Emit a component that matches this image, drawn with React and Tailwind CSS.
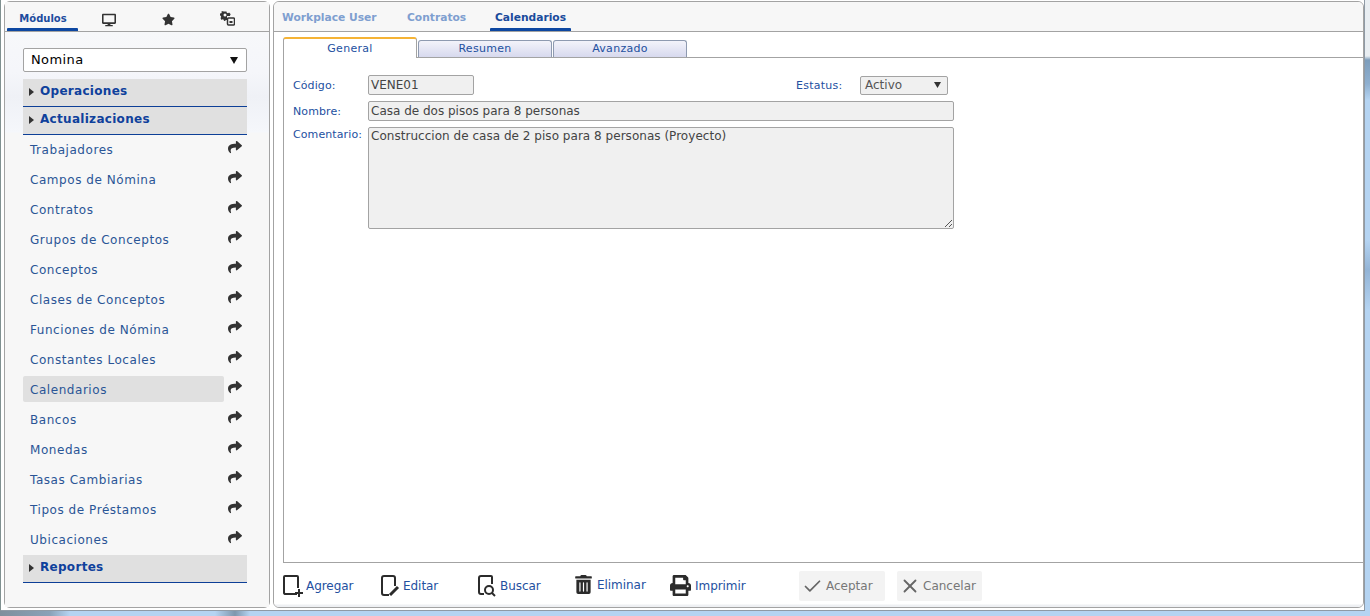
import React from "react";
import { Check, X } from "lucide-react";
import { FaShare, FaStar, FaDesktop, FaPrint, FaTrashAlt } from "react-icons/fa";

const items = ["Trabajadores","Campos de Nómina","Contratos","Grupos de Conceptos","Conceptos","Clases de Conceptos","Funciones de Nómina","Constantes Locales","Calendarios","Bancos","Monedas","Tasas Cambiarias","Tipos de Préstamos","Ubicaciones"];
const font = "font-['DejaVu_Sans',sans-serif]";

function Head({ label }) {
  return (
    <div className="h-7 bg-[#e0e0e0] border-b border-[#0d3f97] flex items-center pl-[6px] text-[12px] font-bold text-[#0f419c] tracking-[0.3px] pb-[3px]">
      <svg width="6" height="8" viewBox="0 0 6 8" className="mr-[5px] mt-[1px]"><path d="M0 0l5 4-5 4z" fill="#333" /></svg>
      {label}
    </div>
  );
}

function Sq({ children }) {
  return (
    <svg width="22" height="22" viewBox="0 0 22 22" fill="none" stroke="#2b2b2b" strokeWidth="2" className="shrink-0 -ml-[1px]">{children}</svg>
  );
}

function Action({ icon, label, w }) {
  return (
    <div className={`flex items-center gap-[1px] text-xs text-[#23509f] tracking-[-0.05px] ${w}`}>
      {icon}
      <span className="ml-[1px]">{label}</span>
    </div>
  );
}

export default function App() {
  return (
    <div className={`${font} w-[1370px] h-[616px] overflow-hidden flex flex-col bg-[linear-gradient(#e9eef2_0,#e9eef2_56px,#7d9dbb_60px,#8fb0d0_84px,#b5d4f2_100px,#b5d4f2_240px,#93b4d6_270px,#b5d4f2_310px,#b5d4f2_616px)]`}>
      <div className="flex h-[611px] shrink-0 w-[1365px] pl-[3px] pt-[1px] gap-[3px] bg-white border-l border-r border-b border-l-[#7f9090] border-r-[#8f9aa5] border-b-[#8f9aa5]">
        {/* Left */}
        <aside className="w-[266px] h-[607px] shrink-0 border border-[#a3a3a3] rounded-[6px] bg-[#f7f7f7] flex flex-col">
          <div className="h-[30px] shrink-0 border-b border-[#a3a3a3] flex pl-[2px] bg-[#f7f7f7]">
            <div className="w-[71px] h-[29px] relative flex items-start justify-center pt-[9px] pl-[1px] text-[10px] font-bold text-[#1d4c9e]">
              Módulos
              <div className="absolute left-0 right-0 bottom-0 h-[3px] bg-[#0d47a1] rounded-t-[1px]" />
            </div>
            <div className="w-[60px] flex justify-center pt-[11px] pl-[1px]"><FaDesktop size={14} color="#333" /></div>
            <div className="w-[60px] flex justify-center pt-[11px]"><FaStar size={13} color="#333" /></div>
            <div className="w-[58px] flex justify-center pt-[9px]">
              <svg width="15" height="15" viewBox="0 0 15 15"><path d="M4 0.500h2.500l.3 1.300 1.200.5 1.100-.7 1.600 1.600-.7 1.100.2.700H7v4H5.800l-.4.800-1.400.2-.3-1.300-1.100-.5-1.100.7L.500 7l.7-1.100-.5-1.100L0 4.500V2.500l1.300-.3.500-1.100L1.500 0z" fill="#333"/><circle cx="5" cy="4" r="1.500" fill="#f7f7f7"/><rect x="7.500" y="7" width="7" height="7" rx="1" fill="none" stroke="#333" strokeWidth="1.500"/><rect x="9.500" y="10" width="3" height="2" fill="#333"/></svg>
            </div>
          </div>
          <div className="flex-1 flex flex-col pl-[18px] pr-[22px] bg-[linear-gradient(#f7f8fa_0,#f5f6fa_40px,#eff1f6_65px,#f5f7fb_100px,#f7f7f7_101px)]">
            <div className="mt-[16px] h-6 shrink-0 border border-[#a3a3a3] rounded-[2px] bg-white flex items-center justify-between pl-[7px] pr-[8px] text-[13px] text-black tracking-[0.4px]">
              <span>Nomina</span>
              <svg width="8" height="7" viewBox="0 0 8 7"><path d="M0 0h8L4 7z" fill="#111" /></svg>
            </div>
            <div className="mt-[7px]"><Head label="Operaciones" /><Head label="Actualizaciones" /></div>
            <div>
              {items.map((t) => (
                <div key={t} className="h-[30px] flex items-center relative">
                  <div className={`w-[201px] h-[26px] -mt-[2px] pt-[2px] flex items-center pl-[7px] rounded-[2px] text-xs text-[#2a5596] tracking-[0.55px] ${t === "Calendarios" ? "bg-[#e0e0e0]" : ""}`}>{t}</div>
                  <FaShare size={14} color="#333" className="ml-[4px] -mt-[6px]" />
                </div>
              ))}
            </div>
            <div><Head label="Reportes" /></div>
          </div>
        </aside>
        {/* Right */}
        <main className="w-[1091px] h-[607px] border border-[#a3a3a3] rounded-[6px] flex flex-col bg-white overflow-hidden">
          <div className="h-[30px] shrink-0 border-b border-[#a3a3a3] bg-[#f7f7f7] flex text-[10.7px] font-bold pl-[2px]">
            <div className="w-[125px] pl-[6px] pt-[8px] text-[#7f9fd0]">Workplace User</div>
            <div className="w-[89px] pl-[6px] pt-[8px] text-[#7f9fd0]">Contratos</div>
            <div className="w-[81px] h-[29px] relative text-center pt-[8px] text-[#1a4b9c]">
              Calendarios
              <div className="absolute left-0 right-0 bottom-0 h-[3px] bg-[#0d47a1] rounded-t-[1px]" />
            </div>
          </div>
          <div className="flex-1 flex flex-col pl-[9px]">
            <div className="h-[26px] shrink-0 flex items-end border-b border-[#a3a3a3] gap-[1px]">
              <div className="w-[134px] h-[21px] bg-white border border-[#a3a3a3] border-t-[#f5b335] border-t-2 border-b-0 rounded-t-[3px] -mb-[1px] relative z-10 text-center text-[11px] text-[#23509f] tracking-[0.3px] pt-[2px]">General</div>
              <div className="w-[134px] h-[17px] border border-[#8e9ab0] border-b-0 rounded-t-[3px] bg-[linear-gradient(#f3f3fa,#d7d9ee)] text-center text-[11px] text-[#23509f] tracking-[0.3px] leading-[16px]">Resumen</div>
              <div className="w-[134px] h-[17px] border border-[#8e9ab0] border-b-0 rounded-t-[3px] bg-[linear-gradient(#f3f3fa,#d7d9ee)] text-center text-[11px] text-[#23509f] tracking-[0.3px] leading-[16px]">Avanzado</div>
            </div>
            <div className="h-[505px] shrink-0 border-l border-b border-[#a3a3a3] pl-[9px] pt-[17px] text-[11px] text-[#23509f] tracking-[0.1px]">
              <div className="flex items-center h-5">
                <div className="w-[75px] pt-[2px]">Código:</div>
                <div className="w-[106px] h-5 border border-[#a3a3a3] rounded-[2px] bg-[#f0f0f0] pl-[2px] text-xs text-[#444] leading-[18px] tracking-normal">VENE01</div>
                <div className="ml-[322px] w-[64px] pt-[2px] tracking-[0.25px]">Estatus:</div>
                <div className="w-[88px] h-[19px] border border-[#a3a3a3] rounded-[2px] bg-[#f0f0f0] flex items-center justify-between pl-[4px] pr-[6px] text-xs text-[#555] tracking-normal">
                  <span>Activo</span>
                  <svg width="7" height="6" viewBox="0 0 7 6"><path d="M0 0h7L3.500 6z" fill="#333" /></svg>
                </div>
              </div>
              <div className="flex items-center h-5 mt-[6px]">
                <div className="w-[75px] pt-[2px]">Nombre:</div>
                <div className="w-[586px] h-5 border border-[#a3a3a3] rounded-[2px] bg-[#f0f0f0] pl-[2px] text-xs text-[#444] leading-[18px] tracking-normal">Casa de dos pisos para 8 personas</div>
              </div>
              <div className="flex items-start mt-[6px]">
                <div className="w-[75px]">Comentario:</div>
                <div className="w-[586px] h-[102px] border border-[#a3a3a3] rounded-[2px] bg-[#f0f0f0] pl-[2px] text-xs text-[#444] leading-[16px] tracking-[0.03px] relative">
                  Construccion de casa de 2 piso para 8 personas (Proyecto)
                  <svg width="9" height="9" viewBox="0 0 9 9" className="absolute right-0 bottom-0"><path d="M1 8l7-7M5 8l3-3" stroke="#555" strokeWidth="1" /></svg>
                </div>
              </div>
            </div>
            <div className="flex-1 flex items-start pt-[12px] relative bg-[linear-gradient(#ffffff_0,#ffffff_41px,#eef0f3_42px)] -ml-[9px] pl-[9px]">
              <Action w="w-[97px]" label="Agregar" icon={<Sq><path d="M15 19H3a2 2 0 0 1-1-1V2a1 1 0 0 1 1-1h12a1 1 0 0 1 1 1v11" /><path d="M13 18h8M17 14v8" /></Sq>} />
              <Action w="w-[97px]" label="Editar" icon={<Sq><path d="M10 20H5a2 2 0 0 1-2-2V3a2 2 0 0 1 2-2h9a2 2 0 0 1 2 2v8" /><path d="M11 20l8-8" strokeWidth="3" /></Sq>} />
              <Action w="w-[97px]" label="Buscar" icon={<Sq><path d="M8 19H5a2 2 0 0 1-2-2V3a2 2 0 0 1 2-2h10a1 1 0 0 1 1 1v7" /><circle cx="13" cy="15" r="4" /><path d="M16 18l3 3" /></Sq>} />
              <Action w="w-[95px]" label="Eliminar" icon={<FaTrashAlt size={19} color="#2b2b2b" className="mr-[2px]" />} />
              <Action w="w-[130px]" label="Imprimir" icon={<FaPrint size={21} color="#2b2b2b" className="mr-[2px] ml-[1px]" />} />
              <div className="w-[86px] h-[30px] -mt-[4px] bg-[#f3f3f3] rounded-[2px] flex items-center pl-[3px] gap-[3px] text-xs text-[#777]"><Check size={21} color="#666" strokeWidth={2} />Aceptar</div>
              <div className="ml-[12px] w-[85px] h-[30px] -mt-[4px] bg-[#f3f3f3] rounded-[2px] flex items-center pl-[2px] gap-[2px] text-xs text-[#777]"><X size={22} color="#666" strokeWidth={2} />Cancelar</div>
            </div>
          </div>
        </main>
      </div>
      <div className="flex-1 bg-[linear-gradient(90deg,#7f8f9c_0,#8aa2b8_50px,#b5d4f2_70px,#b5d4f2_215px,#7e97ad_235px,#b5d4f2_250px,#b5d4f2_100%)]" />
    </div>
  );
}
